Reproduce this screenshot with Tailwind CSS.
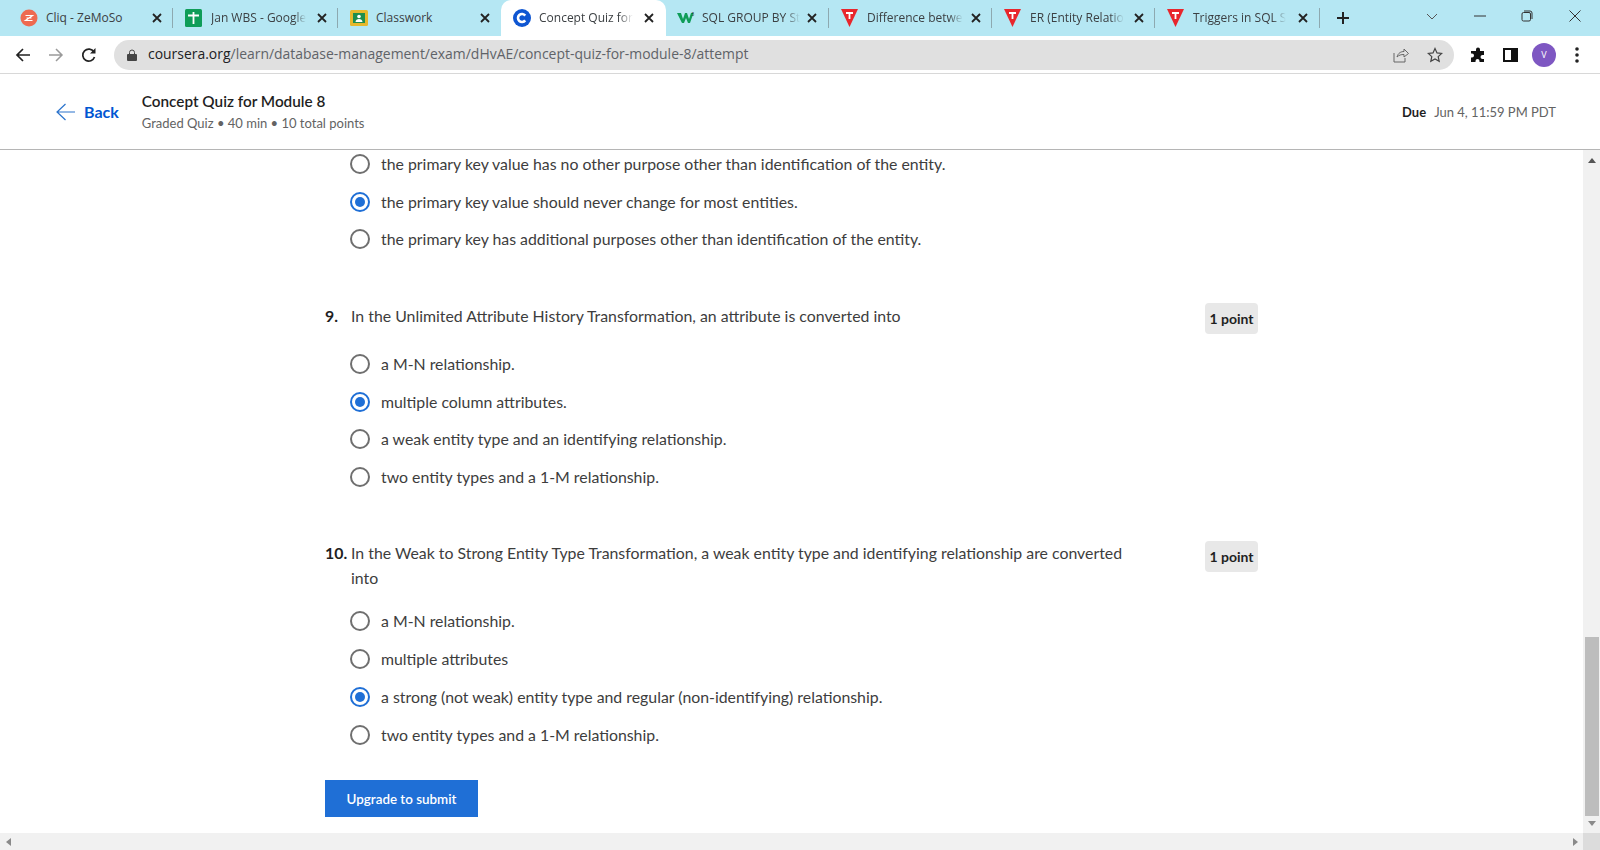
<!DOCTYPE html>
<html lang="en">
<head>
  <meta charset="UTF-8" />
  <title>Concept Quiz for Module 8</title>
  <script src="https://cdn.jsdelivr.net/npm/@tailwindcss/browser@4"></script>
</head>
<body class="bg-white overflow-hidden font-['Lato',sans-serif]">
<div class="w-[1600px] h-[850px] flex flex-col overflow-hidden">

  <!-- Tab strip -->
  <div class="h-[36px] bg-[#b5e7f3] flex items-center pl-[8px] font-['Open_Sans',sans-serif] text-[12px] text-[#3c4043] shrink-0">
    <div class="w-[165px] h-full flex items-center pl-[12px]">
      <svg class="w-[18px] h-[18px] shrink-0" viewBox="0 0 18 18"><circle cx="9" cy="9" r="8.5" fill="#ee6a50"/><path d="M5.500 6.500h7l-7 5h7M6.500 9h5" stroke="#fff" stroke-width="1.200" fill="none"/></svg>
      <span class="ml-[8px] w-[107px] shrink-0 whitespace-nowrap">Cliq - ZeMoSo</span>
      <svg class="w-[10px] h-[10px] ml-[-1px] shrink-0" viewBox="0 0 10 10"><path d="M1 1l8 8M9 1l-8 8" stroke="#222" stroke-width="1.800"/></svg>
      <span class="ml-auto w-px h-[20px] bg-[#8da9b0]"></span>
    </div>
    <div class="w-[165px] h-full flex items-center pl-[12px]">
      <svg class="w-[17px] h-[18px] shrink-0" viewBox="0 0 17 18"><rect width="17" height="18" rx="1.500" fill="#0f9d58"/><path d="M3 6.500h11M8.500 3v12" stroke="#fff" stroke-width="1.800"/></svg>
      <span class="ml-[9px] w-[107px] shrink-0"><span class="block w-fit whitespace-nowrap [mask-image:linear-gradient(to_right,black_88%,transparent)]">Jan WBS - Google</span></span>
      <svg class="w-[10px] h-[10px] ml-[-1px] shrink-0" viewBox="0 0 10 10"><path d="M1 1l8 8M9 1l-8 8" stroke="#222" stroke-width="1.800"/></svg>
      <span class="ml-auto w-px h-[20px] bg-[#8da9b0]"></span>
    </div>
    <div class="w-[163px] h-full flex items-center pl-[12px]">
      <svg class="w-[18px] h-[16px] shrink-0" viewBox="0 0 18 16"><rect width="18" height="16" rx="1.500" fill="#e6b82c"/><rect x="3" y="3" width="12" height="10" fill="#1e8e4e"/><circle cx="9" cy="6.500" r="1.800" fill="#fff"/><path d="M5.500 12c0-4 7-4 7 0z" fill="#fff"/></svg>
      <span class="ml-[8px] w-[105px] shrink-0 whitespace-nowrap">Classwork</span>
      <svg class="w-[10px] h-[10px] ml-[-1px] shrink-0" viewBox="0 0 10 10"><path d="M1 1l8 8M9 1l-8 8" stroke="#222" stroke-width="1.800"/></svg>
    </div>

    <!-- Active tab -->
    <div class="w-[165px] h-full flex items-center pl-[12px] bg-white rounded-t-[10px]">
      <svg class="w-[18px] h-[18px] shrink-0" viewBox="0 0 18 18"><circle cx="9" cy="9" r="9" fill="#0f56d2"/><path d="M12.200 6.600A4 4 0 1 0 12.200 11.400" stroke="#fff" stroke-width="2.600" fill="none"/></svg>
      <span class="ml-[8px] w-[99px] shrink-0"><span class="block w-fit whitespace-nowrap [mask-image:linear-gradient(to_right,black_85%,transparent)]">Concept Quiz for</span></span>
      <svg class="w-[10px] h-[10px] ml-[6px] shrink-0" viewBox="0 0 10 10"><path d="M1 1l8 8M9 1l-8 8" stroke="#222" stroke-width="1.800"/></svg>
    </div>

    <div class="w-[163px] h-full flex items-center pl-[11px]">
      <svg class="w-[18px] h-[12px] shrink-0" viewBox="0 0 18 12"><path d="M0 1h4l2 6 2-6h2l2 6 2-6h2.500L13 11h-2L9 6l-2 5H5z" fill="#0f9d58"/><text x="14.500" y="4" font-size="4.500" fill="#111">3</text></svg>
      <span class="ml-[7px] w-[100px] shrink-0"><span class="block w-fit whitespace-nowrap [mask-image:linear-gradient(to_right,black_85%,transparent)]">SQL GROUP BY St</span></span>
      <svg class="w-[10px] h-[10px] ml-[5px] shrink-0" viewBox="0 0 10 10"><path d="M1 1l8 8M9 1l-8 8" stroke="#222" stroke-width="1.800"/></svg>
      <span class="ml-auto w-px h-[20px] bg-[#8da9b0]"></span>
    </div>
    <div class="w-[163px] h-full flex items-center pl-[12px]">
      <svg class="w-[17px] h-[18px] shrink-0" viewBox="0 0 17 18"><path d="M0 0h17L8.500 18z" fill="#e8262c"/><path d="M5 4h7M8.500 4v6" stroke="#fff" stroke-width="1.800"/></svg>
      <span class="ml-[9px] w-[102px] shrink-0"><span class="block w-fit whitespace-nowrap [mask-image:linear-gradient(to_right,black_85%,transparent)]">Difference betwe</span></span>
      <svg class="w-[10px] h-[10px] ml-[2px] shrink-0" viewBox="0 0 10 10"><path d="M1 1l8 8M9 1l-8 8" stroke="#222" stroke-width="1.800"/></svg>
      <span class="ml-auto w-px h-[20px] bg-[#8da9b0]"></span>
    </div>
    <div class="w-[163px] h-full flex items-center pl-[12px]">
      <svg class="w-[17px] h-[18px] shrink-0" viewBox="0 0 17 18"><path d="M0 0h17L8.500 18z" fill="#e8262c"/><path d="M5 4h7M8.500 4v6" stroke="#fff" stroke-width="1.800"/></svg>
      <span class="ml-[9px] w-[102px] shrink-0"><span class="block w-fit whitespace-nowrap [mask-image:linear-gradient(to_right,black_85%,transparent)]">ER (Entity Relatio</span></span>
      <svg class="w-[10px] h-[10px] ml-[2px] shrink-0" viewBox="0 0 10 10"><path d="M1 1l8 8M9 1l-8 8" stroke="#222" stroke-width="1.800"/></svg>
      <span class="ml-auto w-px h-[20px] bg-[#8da9b0]"></span>
    </div>
    <div class="w-[165px] h-full flex items-center pl-[12px]">
      <svg class="w-[17px] h-[18px] shrink-0" viewBox="0 0 17 18"><path d="M0 0h17L8.500 18z" fill="#e8262c"/><path d="M5 4h7M8.500 4v6" stroke="#fff" stroke-width="1.800"/></svg>
      <span class="ml-[9px] w-[103px] shrink-0"><span class="block w-fit whitespace-nowrap [mask-image:linear-gradient(to_right,black_85%,transparent)]">Triggers in SQL S</span></span>
      <svg class="w-[10px] h-[10px] ml-[2px] shrink-0" viewBox="0 0 10 10"><path d="M1 1l8 8M9 1l-8 8" stroke="#222" stroke-width="1.800"/></svg>
      <span class="ml-auto w-px h-[20px] bg-[#8da9b0]"></span>
    </div>
    <svg class="w-[14px] h-[14px] ml-[16px] shrink-0" viewBox="0 0 14 14"><path d="M7 1v12M1 7h12" stroke="#222" stroke-width="2"/></svg>

    <!-- Window controls -->
    <svg class="w-[12px] h-[8px] ml-[76px] mb-[3px] shrink-0" viewBox="0 0 12 8"><path d="M1 1l5 5 5-5" stroke="#555" fill="none"/></svg>
    <svg class="w-[12px] h-[2px] ml-[36px] mb-[4px] shrink-0" viewBox="0 0 12 2"><path d="M0 1h12" stroke="#333"/></svg>
    <svg class="w-[12px] h-[12px] ml-[35px] mb-[4px] shrink-0" viewBox="0 0 12 12"><rect x="1" y="2.500" width="8.500" height="8.500" rx="1.500" stroke="#333" fill="none"/><path d="M3 1h6a2 2 0 0 1 2 2v6" stroke="#333" fill="none"/></svg>
    <svg class="w-[12px] h-[12px] ml-[36px] mb-[4px] shrink-0" viewBox="0 0 12 12"><path d="M.5.5l11 11M11.500.5l-11 11" stroke="#333"/></svg>
  </div>

  <!-- Toolbar -->
  <div class="h-[38px] bg-white border-b border-[#d8d8d8] flex items-center shrink-0 pl-[15px] font-['Open_Sans',sans-serif]">
    <svg class="w-[16px] h-[16px] shrink-0" viewBox="0 0 16 16"><path d="M15 8H2M8 2L2 8l6 6" stroke="#222" stroke-width="1.700" fill="none"/></svg>
    <svg class="w-[16px] h-[16px] ml-[17px] shrink-0" viewBox="0 0 16 16"><path d="M1 8h13M8 2l6 6-6 6" stroke="#9a9a9a" stroke-width="1.500" fill="none"/></svg>
    <svg class="w-[16px] h-[16px] ml-[17px] shrink-0" viewBox="0 0 16 16"><path d="M13.500 10a6 6 0 1 1-.6-5" stroke="#222" stroke-width="1.700" fill="none"/><path d="M14.500 1v5.500H9z" fill="#222"/></svg>
    <div class="w-[1340px] h-[30px] ml-[17px] bg-[#e0e0e0] rounded-full flex items-center pl-[13px] pr-[11px] shrink-0">
      <svg class="w-[10px] h-[12px] shrink-0" viewBox="0 0 10 12"><rect y="5" width="10" height="7" rx="1" fill="#444"/><path d="M2.500 5V3.500a2.500 2.500 0 0 1 5 0V5" stroke="#444" fill="none"/></svg>
      <span class="ml-[11px] text-[13.950px] text-[#5f6368] whitespace-nowrap"><span class="text-[#202124]">coursera.org</span>/learn/database-management/exam/dHvAE/concept-quiz-for-module-8/attempt</span>
      <svg class="w-[16px] h-[16px] ml-auto shrink-0" viewBox="0 0 16 16"><path d="M1 6v9h11v-4" stroke="#666" fill="none"/><path d="M4 10c1-4 4-5.500 7-5.500V2l4.500 4.500L11 10V7.500c-3 0-5 .5-7 2.500z" stroke="#666" fill="none"/></svg>
      <svg class="w-[16px] h-[16px] ml-[18px] shrink-0" viewBox="0 0 16 16"><path d="M8 1.500l2 4.400 4.700.5-3.500 3.200 1 4.700L8 11.900l-4.200 2.400 1-4.700L1.300 6.400 6 5.900z" stroke="#444" stroke-width="1.200" fill="none"/></svg>
    </div>
    <svg class="w-[16px] h-[16px] ml-[16px] shrink-0" viewBox="0 0 16 16"><path d="M6 2.500a2 2 0 0 1 4 0V4h4v4h-1.500a2 2 0 0 0 0 4H14v3H9.500v-1a2 2 0 0 0-4 0v1H1v-4.500h1a2 2 0 0 0 0-4H1V4h5z" fill="#111"/></svg>
    <svg class="w-[15px] h-[14px] ml-[17px] shrink-0" viewBox="0 0 15 14"><rect x="1" y="1" width="13" height="12" fill="#fff" stroke="#111" stroke-width="2"/><rect x="8" y="1" width="6" height="12" fill="#111"/></svg>
    <span class="w-[24px] h-[24px] ml-[14px] rounded-full bg-[#7e57c2] text-white text-[9px] flex items-center justify-center shrink-0">V</span>
    <svg class="w-[4px] h-[16px] ml-[19px] shrink-0" viewBox="0 0 4 16"><circle cx="2" cy="2" r="1.800" fill="#222"/><circle cx="2" cy="8" r="1.800" fill="#222"/><circle cx="2" cy="14" r="1.800" fill="#222"/></svg>
  </div>

  <!-- Quiz header -->
  <div class="h-[76px] bg-white border-b border-[#b5b5b5] flex items-center shrink-0 pl-[56px] pr-[44px]">
    <svg class="w-[19px] h-[18px] shrink-0" viewBox="0 0 19 18"><path d="M19 9H1M9.500 1L1 9l8.500 8" stroke="#2a73cc" stroke-width="1.200" fill="none"/></svg>
    <span class="ml-[9px] text-[16px] font-bold text-[#0056d2]">Back</span>
    <div class="ml-[23px] mt-[1px] flex flex-col">
      <span class="text-[15.300px] leading-[22px] font-semibold text-[#1f1f1f]">Concept Quiz for Module 8</span>
      <span class="text-[13px] leading-[22px] text-[#636363]">Graded Quiz • 40 min • 10 total points</span>
    </div>
    <div class="ml-auto mt-[2px] text-[13px] text-[#636363]"><span class="font-bold text-[#1f1f1f] mr-[8px]">Due</span>Jun 4, 11:59 PM PDT</div>
  </div>

  <!-- Scrolling area -->
  <div class="flex-1 flex min-h-0">
    <div class="flex-1 pl-[325px] overflow-hidden text-[15.850px] text-[#3d3d3d]">

      <div class="flex flex-col gap-[9.500px]">
        <div class="h-[28px] flex items-center pl-[25px]"><span class="w-[20px] h-[20px] rounded-full border-2 border-[#6f6f6f] shrink-0"></span><span class="ml-[11px]">the primary key value has no other purpose other than identification of the entity.</span></div>
        <div class="h-[28px] flex items-center pl-[25px]"><span class="w-[20px] h-[20px] rounded-full border-2 border-[#1f6fd6] flex items-center justify-center shrink-0"><span class="w-[10px] h-[10px] rounded-full bg-[#1f6fd6]"></span></span><span class="ml-[11px]">the primary key value should never change for most entities.</span></div>
        <div class="h-[28px] flex items-center pl-[25px]"><span class="w-[20px] h-[20px] rounded-full border-2 border-[#6f6f6f] shrink-0"></span><span class="ml-[11px]">the primary key has additional purposes other than identification of the entity.</span></div>
      </div>

      <div class="mt-[50px] flex w-[933px]">
        <span class="w-[26px] leading-[25px] font-bold text-[#1f1f1f] shrink-0">9.</span>
        <p class="w-[780px] leading-[25px]">In the Unlimited Attribute History Transformation, an attribute is converted into</p>
        <span class="ml-auto w-[53px] h-[31px] rounded-[4px] bg-[#e8e8e8] text-[14px] font-bold text-[#1f1f1f] flex items-center justify-center">1 point</span>
      </div>
      <div class="mt-[16px] flex flex-col gap-[9.700px]">
        <div class="h-[28px] flex items-center pl-[25px]"><span class="w-[20px] h-[20px] rounded-full border-2 border-[#6f6f6f] shrink-0"></span><span class="ml-[11px]">a M-N relationship.</span></div>
        <div class="h-[28px] flex items-center pl-[25px]"><span class="w-[20px] h-[20px] rounded-full border-2 border-[#1f6fd6] flex items-center justify-center shrink-0"><span class="w-[10px] h-[10px] rounded-full bg-[#1f6fd6]"></span></span><span class="ml-[11px]">multiple column attributes.</span></div>
        <div class="h-[28px] flex items-center pl-[25px]"><span class="w-[20px] h-[20px] rounded-full border-2 border-[#6f6f6f] shrink-0"></span><span class="ml-[11px]">a weak entity type and an identifying relationship.</span></div>
        <div class="h-[28px] flex items-center pl-[25px]"><span class="w-[20px] h-[20px] rounded-full border-2 border-[#6f6f6f] shrink-0"></span><span class="ml-[11px]">two entity types and a 1-M relationship.</span></div>
      </div>

      <div class="mt-[50px] flex w-[933px]">
        <span class="w-[26px] leading-[25px] font-bold text-[#1f1f1f] shrink-0 mt-[-1px]">10.</span>
        <p class="w-[780px] leading-[25px] mt-[-1px]">In the Weak to Strong Entity Type Transformation, a weak entity type and identifying relationship are converted into</p>
        <span class="ml-auto w-[53px] h-[31px] rounded-[4px] bg-[#e8e8e8] text-[14px] font-bold text-[#1f1f1f] flex items-center justify-center">1 point</span>
      </div>
      <div class="mt-[17px] flex flex-col gap-[10px]">
        <div class="h-[28px] flex items-center pl-[25px]"><span class="w-[20px] h-[20px] rounded-full border-2 border-[#6f6f6f] shrink-0"></span><span class="ml-[11px]">a M-N relationship.</span></div>
        <div class="h-[28px] flex items-center pl-[25px]"><span class="w-[20px] h-[20px] rounded-full border-2 border-[#6f6f6f] shrink-0"></span><span class="ml-[11px]">multiple attributes</span></div>
        <div class="h-[28px] flex items-center pl-[25px]"><span class="w-[20px] h-[20px] rounded-full border-2 border-[#1f6fd6] flex items-center justify-center shrink-0"><span class="w-[10px] h-[10px] rounded-full bg-[#1f6fd6]"></span></span><span class="ml-[11px]">a strong (not weak) entity type and regular (non-identifying) relationship.</span></div>
        <div class="h-[28px] flex items-center pl-[25px]"><span class="w-[20px] h-[20px] rounded-full border-2 border-[#6f6f6f] shrink-0"></span><span class="ml-[11px]">two entity types and a 1-M relationship.</span></div>
      </div>

      <button class="mt-[31px] w-[153px] h-[37px] bg-[#1f6fd6] text-white text-[13.400px] font-semibold">Upgrade to submit</button>
    </div>

    <!-- Vertical scrollbar -->
    <div class="w-[17px] bg-[#f1f1f1] flex flex-col items-center shrink-0">
      <svg class="w-[8px] h-[5px] mt-[8px] shrink-0" viewBox="0 0 8 5"><path d="M4 0l4 5H0z" fill="#555"/></svg>
      <div class="mt-auto w-[14px] h-[179px] bg-[#bdbdbd]"></div>
      <svg class="w-[8px] h-[5px] mt-[5px] mb-[7px] shrink-0" viewBox="0 0 8 5"><path d="M0 0h8L4 5z" fill="#8a8a8a"/></svg>
    </div>
  </div>

  <!-- Horizontal scrollbar -->
  <div class="h-[17px] bg-[#f1f1f1] flex items-center shrink-0 pl-[6px]">
    <svg class="w-[5px] h-[8px] shrink-0" viewBox="0 0 5 8"><path d="M5 0v8L0 4z" fill="#8a8a8a"/></svg>
    <svg class="w-[5px] h-[8px] ml-auto mr-[5px] shrink-0" viewBox="0 0 5 8"><path d="M0 0v8l5-4z" fill="#8a8a8a"/></svg>
    <div class="w-[17px] h-full bg-[#dcdcdc] shrink-0"></div>
  </div>
</div>
</body>
</html>
